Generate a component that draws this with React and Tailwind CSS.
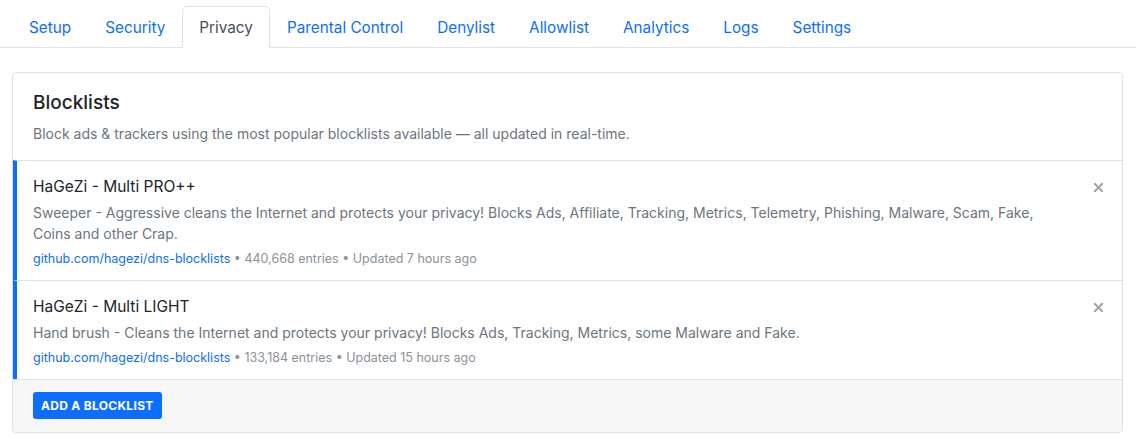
import { X } from "lucide-react";

const tabs = ["Setup", "Security", "Privacy", "Parental Control", "Denylist", "Allowlist", "Analytics", "Logs", "Settings"];

const lists = [
    {
        name: "HaGeZi - Multi PRO++",
        desc: "Sweeper - Aggressive cleans the Internet and protects your privacy! Blocks Ads, Affiliate, Tracking, Metrics, Telemetry, Phishing, Malware, Scam, Fake, Coins and other Crap.",
        entries: "440,668",
        updated: "7 hours ago",
    },
    {
        name: "HaGeZi - Multi LIGHT",
        desc: "Hand brush - Cleans the Internet and protects your privacy! Blocks Ads, Tracking, Metrics, some Malware and Fake.",
        entries: "133,184",
        updated: "15 hours ago",
    },
];

export default function App() {
    return (
        <div className="min-h-screen bg-white text-[#212529]" style={{ fontFamily: "Inter, 'Noto Sans', sans-serif" }}>
            {/* ─── Tabs ─── */}
            <div className="pt-[6px] border-b border-[#dee2e6] px-[12px]">
                <ul className="flex -mb-px">
                    {tabs.map((t) => (
                        <li key={t}>
                            <a
                                className={
                                    t === "Privacy"
                                        ? "block px-4 h-[42px] leading-[41px] text-[15.3px] text-[#495057] bg-white border border-[#dee2e6] border-b-white rounded-t-[5px]"
                                        : "block px-4 h-[42px] leading-[41px] text-[15.3px] text-[#0d6efd] border border-transparent"
                                }
                            >
                                {t}
                            </a>
                        </li>
                    ))}
                </ul>
            </div>

            {/* ─── Card ─── */}
            <div className="px-[12px] pt-[24px]">
                <div className="border border-[#dee2e6] rounded-[4px] overflow-hidden w-[1111px]">
                    <div className="px-5 pt-[17px] pb-[16px]">
                        <h2 className="text-[19px] font-medium leading-[26px]">Blocklists</h2>
                        <p className="mt-[8px] text-[14px] text-[#6c757d] leading-[20px]">
                            Block ads &amp; trackers using the most popular blocklists available — all updated in real-time.
                        </p>
                    </div>
                    {lists.map((l) => (
                        <div key={l.name} className="relative border-t border-[#dee2e6] border-l-4 border-l-[#0d6efd] pl-4 pr-16 pt-[14px] pb-[11px]">
                            <div className="text-[15.5px] leading-[24px]">{l.name}</div>
                            <p className="mt-[3px] text-[14px] leading-[21px] text-[#6c757d]">{l.desc}</p>
                            <div className="mt-[5px] text-[12.5px] leading-[20px] text-[#8c9299]">
                                <a className="text-[#0d6efd]">github.com/hagezi/dns-blocklists</a>
                                <span> • {l.entries} entries • Updated {l.updated}</span>
                            </div>
                            <button className="absolute right-[16px] top-[19px] text-[#a3a3a3]">
                                <X size={15} strokeWidth={3} />
                            </button>
                        </div>
                    ))}
                    <div className="bg-[#f6f6f6] border-t border-[#dee2e6] px-5 pt-[12px] pb-[13px]">
                        <button className="block bg-[#0d6efd] text-white text-[12px] font-bold tracking-wide rounded-[3px] px-[8px] h-[27px]">
                            ADD A BLOCKLIST
                        </button>
                    </div>
                </div>
            </div>
        </div>
    );
}
